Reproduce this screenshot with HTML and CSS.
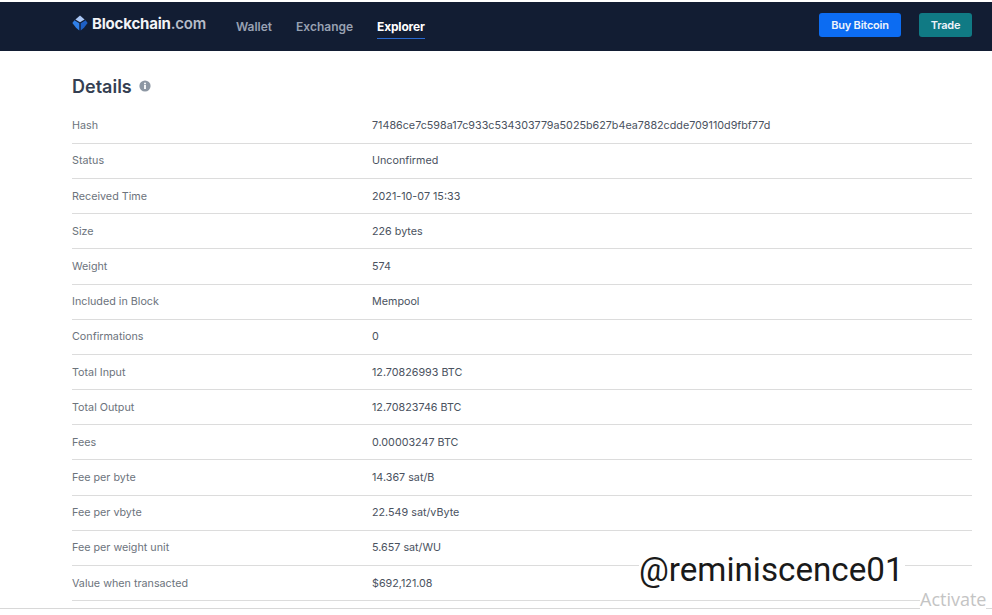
FILE: index.html
```html
<!DOCTYPE html>
<html lang="en">
<head>
<meta charset="utf-8">
<title>Details</title>
<link rel="stylesheet" href="styles.css">
</head>
<body>
<header class="topbar">
  <div class="brand">
    <svg class="logo" viewBox="0 0 16 16" width="16" height="16" aria-hidden="true">
      <path d="M8 .4 12.6 4.4 8 7.2 3.4 4.4Z" fill="#a9c6f5"/>
      <path d="M2.4 5.2 7.3 8.3 7.3 15.4 4 12.8 .4 8Z" fill="#2f7fe8"/>
      <path d="M13.6 5.2 8.7 8.3 8.7 15.4 12 12.8 15.6 8Z" fill="#1d5fc4"/>
    </svg>
    <span class="brand-name">Blockchain<span class="brand-tld">.com</span></span>
  </div>
  <nav class="nav">
    <a class="nav-link">Wallet</a>
    <a class="nav-link">Exchange</a>
    <a class="nav-link nav-active">Explorer</a>
  </nav>
  <div class="actions">
    <a class="btn btn-buy">Buy Bitcoin</a>
    <a class="btn btn-trade">Trade</a>
  </div>
</header>
<main class="content">
  <h1 class="title">Details
    <svg class="info" viewBox="0 0 12 12" width="12" height="12" aria-hidden="true">
      <circle cx="6" cy="6" r="5.6" fill="#8d97a3"/>
      <rect x="5.1" y="5" width="1.8" height="4" fill="#fff"/>
      <rect x="5.1" y="2.7" width="1.8" height="1.6" fill="#fff"/>
    </svg>
  </h1>
  <div class="rows">
    <div class="row"><span class="key">Hash</span><span class="val">71486ce7c598a17c933c534303779a5025b627b4ea7882cdde709110d9fbf77d</span></div>
    <div class="row"><span class="key">Status</span><span class="val">Unconfirmed</span></div>
    <div class="row"><span class="key">Received Time</span><span class="val">2021-10-07 15:33</span></div>
    <div class="row"><span class="key">Size</span><span class="val">226 bytes</span></div>
    <div class="row"><span class="key">Weight</span><span class="val">574</span></div>
    <div class="row"><span class="key">Included in Block</span><span class="val">Mempool</span></div>
    <div class="row"><span class="key">Confirmations</span><span class="val">0</span></div>
    <div class="row"><span class="key">Total Input</span><span class="val">12.70826993 BTC</span></div>
    <div class="row"><span class="key">Total Output</span><span class="val">12.70823746 BTC</span></div>
    <div class="row"><span class="key">Fees</span><span class="val">0.00003247 BTC</span></div>
    <div class="row"><span class="key">Fee per byte</span><span class="val">14.367 sat/B</span></div>
    <div class="row"><span class="key">Fee per vbyte</span><span class="val">22.549 sat/vByte</span></div>
    <div class="row"><span class="key">Fee per weight unit</span><span class="val">5.657 sat/WU</span></div>
    <div class="row"><span class="key">Value when transacted</span><span class="val">$692,121.08</span></div>
  </div>
</main>
<div class="bottom-rule"></div>
<div class="watermark">@reminiscence01</div>
<div class="activate">Activate</div>
</body>
</html>
```

FILE: styles.css
```css
* { box-sizing: border-box; }
html, body { margin: 0; height: 615px; overflow: hidden; background: #fff; }
body { font-family: Inter, "Liberation Sans", sans-serif; position: relative; padding-top: 2px; }
.topbar { height: 49px; background: #121d33; display: flex; align-items: center; padding: 0 20px 0 72px; }
.brand { display: flex; align-items: center; gap: 4px; width: 164px; margin-top: -7px; }
.logo { flex: none; }
.brand-name { font-size: 15px; font-weight: 700; color: #f2f4f7; letter-spacing: -0.2px; }
.brand-tld { color: #b6bcc8; font-weight: 600; }
.nav { display: flex; gap: 24px; flex: 1; margin-top: -3px; }
.nav-link { font-size: 12px; font-weight: 600; color: #98a1b2; padding: 8px 0 4px; border-bottom: 1px solid transparent; }
.nav-active { color: #fff; font-weight: 700; letter-spacing: -0.2px; border-bottom-color: #2a6ad0; }
.actions { display: flex; gap: 18px; margin-top: -3px; }
.btn { height: 24px; display: flex; align-items: center; justify-content: center; border-radius: 3px; font-size: 11px; font-weight: 600; color: #eef3fb; letter-spacing: -0.2px; }
.btn-buy { width: 82px; background: #0c6cf2; }
.btn-trade { width: 53px; background: #107a84; }
.content { padding: 0 20px 0 72px; }
.title { margin: 0; height: 57.6px; padding-top: 25px; font-size: 18px; line-height: 22px; font-weight: 600; color: #353f52; display: flex; align-items: flex-start; gap: 7px; }
.info { margin-top: 4px; }
.rows { display: flex; flex-direction: column; }
.row { height: 35.2px; display: flex; align-items: center; border-bottom: 1px solid #dcdcdc; font-size: 10.75px; }
.key { width: 300px; color: #6c737c; }
.val { color: #4a5260; }
.bottom-rule { position: absolute; left: 0; right: 0; top: 608px; height: 1px; background: #d8d8d8; }
.watermark { position: absolute; left: 639px; top: 551px; font-family: Roboto, sans-serif; font-size: 33.2px; line-height: 38px; color: #1a1a1a; background: #fff; padding-right: 1px; }
.activate { position: absolute; left: 920px; top: 588px; font-family: "Open Sans", sans-serif; font-size: 18px; line-height: 22px; color: #c4c4c4; background: #fff; }
```
